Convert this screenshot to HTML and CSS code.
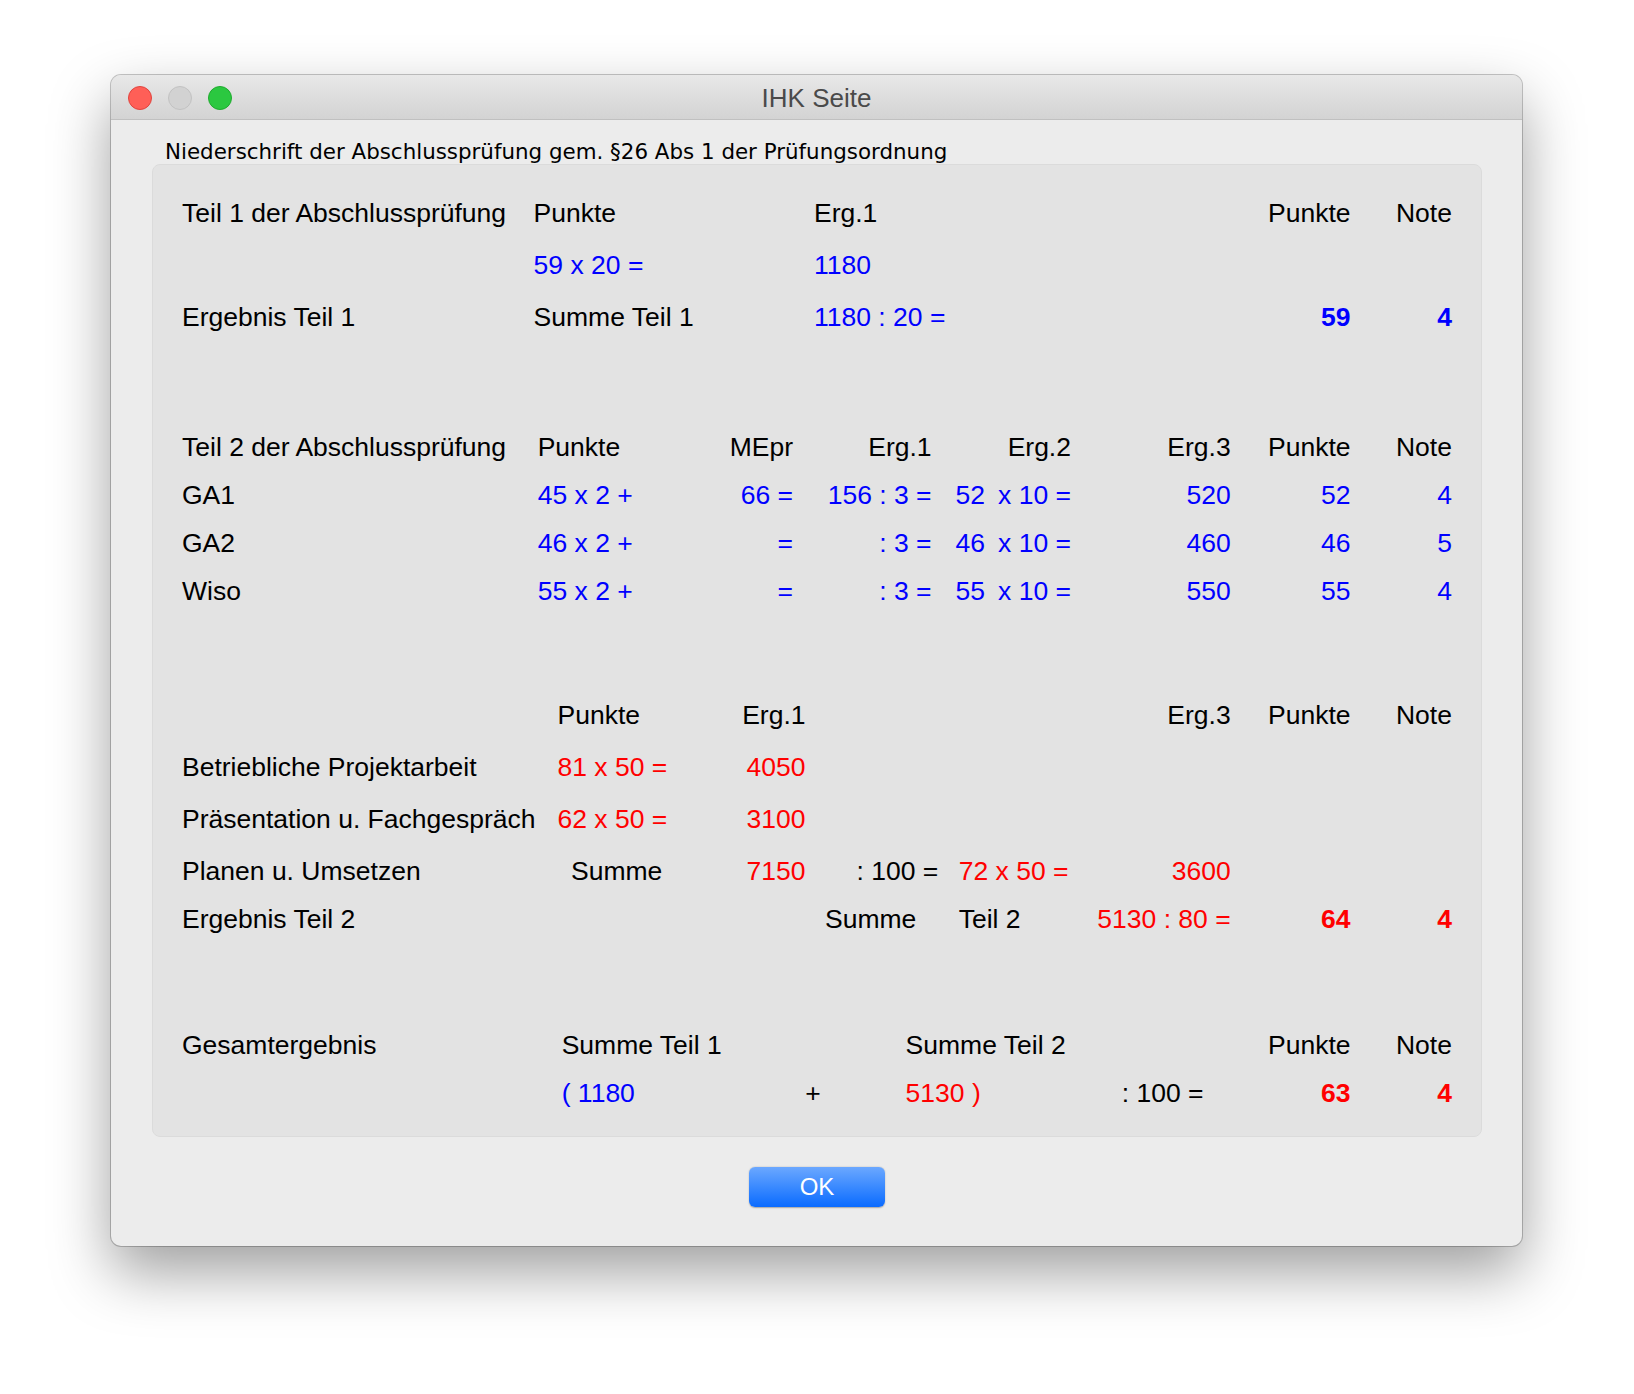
FILE: index.html
```html
<!DOCTYPE html>
<html lang="de">
<head>
<meta charset="utf-8">
<title>IHK Seite</title>
<link rel="stylesheet" href="styles.css">
</head>
<body>
<div class="window">
  <div class="titlebar">
    <div class="lights">
      <span class="light red"></span>
      <span class="light gray"></span>
      <span class="light green"></span>
    </div>
    <div class="title">IHK Seite</div>
    <div></div>
  </div>
  <div class="content">
    <div class="caption">Niederschrift der Abschlussprüfung gem. §26 Abs 1 der Prüfungsordnung</div>
    <div class="box">
      <section class="sec s1">
        <div class="row">
          <span class="k1">Teil 1 der Abschlussprüfung</span>
          <span class="k2">Punkte</span>
          <span class="k3">Erg.1</span>
          <span class="k4 r">Punkte</span>
          <span class="k5 r">Note</span>
        </div>
        <div class="row">
          <span class="k2 bl">59 x 20 =</span>
          <span class="k3 bl">1180</span>
        </div>
        <div class="row">
          <span class="k1">Ergebnis Teil 1</span>
          <span class="k2">Summe Teil 1</span>
          <span class="k3 bl">1180 : 20 =</span>
          <span class="k4 r bl bold">59</span>
          <span class="k5 r bl bold">4</span>
        </div>
      </section>

      <section class="sec s2">
        <div class="row">
          <span class="k1">Teil 2 der Abschlussprüfung</span>
          <span class="k2">Punkte</span>
          <span class="k3 r">MEpr</span>
          <span class="k4 r">Erg.1</span>
          <span class="k6 r">Erg.2</span>
          <span class="k7 r">Erg.3</span>
          <span class="k8 r">Punkte</span>
          <span class="k9 r">Note</span>
        </div>
        <div class="row">
          <span class="k1">GA1</span>
          <span class="k2 bl">45 x 2 +</span>
          <span class="k3 r bl">66 =</span>
          <span class="k4 r bl">156 : 3 =</span>
          <span class="k6 split bl"><span>52</span><span>x 10 =</span></span>
          <span class="k7 r bl">520</span>
          <span class="k8 r bl">52</span>
          <span class="k9 r bl">4</span>
        </div>
        <div class="row">
          <span class="k1">GA2</span>
          <span class="k2 bl">46 x 2 +</span>
          <span class="k3 r bl">=</span>
          <span class="k4 r bl">: 3 =</span>
          <span class="k6 split bl"><span>46</span><span>x 10 =</span></span>
          <span class="k7 r bl">460</span>
          <span class="k8 r bl">46</span>
          <span class="k9 r bl">5</span>
        </div>
        <div class="row">
          <span class="k1">Wiso</span>
          <span class="k2 bl">55 x 2 +</span>
          <span class="k3 r bl">=</span>
          <span class="k4 r bl">: 3 =</span>
          <span class="k6 split bl"><span>55</span><span>x 10 =</span></span>
          <span class="k7 r bl">550</span>
          <span class="k8 r bl">55</span>
          <span class="k9 r bl">4</span>
        </div>
      </section>

      <section class="sec s3">
        <div class="row">
          <span class="k2">Punkte</span>
          <span class="k3 r">Erg.1</span>
          <span class="k6 r">Erg.3</span>
          <span class="k7 r">Punkte</span>
          <span class="k8 r">Note</span>
        </div>
        <div class="row">
          <span class="k1">Betriebliche Projektarbeit</span>
          <span class="k2 rd">81 x 50 =</span>
          <span class="k3 r rd">4050</span>
        </div>
        <div class="row">
          <span class="k1">Präsentation u. Fachgespräch</span>
          <span class="k2 rd">62 x 50 =</span>
          <span class="k3 r rd">3100</span>
        </div>
        <div class="row">
          <span class="k1">Planen u. Umsetzen</span>
          <span class="k2 ind-summe">Summe</span>
          <span class="k3 r rd">7150</span>
          <span class="k4 ind-div">: 100 =</span>
          <span class="k5 rd">72 x 50 =</span>
          <span class="k6 r rd">3600</span>
        </div>
        <div class="row last">
          <span class="k1">Ergebnis Teil 2</span>
          <span class="k4 ind-summe2">Summe</span>
          <span class="k5">Teil 2</span>
          <span class="k6 r rd">5130 : 80 =</span>
          <span class="k7 r rd bold">64</span>
          <span class="k8 r rd bold">4</span>
        </div>
      </section>

      <section class="sec s4">
        <div class="row">
          <span class="k1">Gesamtergebnis</span>
          <span class="k2">Summe Teil 1</span>
          <span class="k5">Summe Teil 2</span>
          <span class="k7 r">Punkte</span>
          <span class="k8 r">Note</span>
        </div>
        <div class="row">
          <span class="k2 bl">( 1180</span>
          <span class="k3 c">+</span>
          <span class="k5 rd">5130 )</span>
          <span class="k6 r">: 100 =</span>
          <span class="k7 r rd bold">63</span>
          <span class="k8 r rd bold">4</span>
        </div>
      </section>
    </div>
    <div class="actions">
      <button class="ok" type="button">OK</button>
    </div>
  </div>
</div>
</body>
</html>
```

FILE: styles.css
```css
html, body {
  margin: 0;
  padding: 0;
  background: #ffffff;
}

html {
  min-height: 100%;
}

body {
  font-family: "Liberation Sans", Arial, Helvetica, sans-serif;
  color: #000;
  padding: 75px 0 0 111px;
  min-height: 100vh;
  box-sizing: border-box;
}

.window {
  width: 1411px;
  height: 1171px;
  background: #ececec;
  border-radius: 10px;
  overflow: hidden;
  box-shadow: 0 26px 60px rgba(0, 0, 0, 0.38), 0 0 0 1px rgba(0, 0, 0, 0.22);
  display: flex;
  flex-direction: column;
}

.titlebar {
  height: 44px;
  border-bottom: 1px solid #c0c0c0;
  background: linear-gradient(#e8e8e8, #d3d3d3);
  display: grid;
  grid-template-columns: 1fr auto 1fr;
  align-items: center;
  flex: none;
}

.lights {
  display: flex;
  gap: 16px;
  padding-left: 17px;
  margin-top: 2px;
}

.light {
  width: 24px;
  height: 24px;
  border-radius: 50%;
  box-sizing: border-box;
  display: block;
}

.light.red {
  background: #ff5f57;
  border: 1px solid #e0443e;
}

.light.gray {
  background: #d2d2d2;
  border: 1px solid #c2c2c2;
}

.light.green {
  background: #2bc840;
  border: 1px solid #1fab2e;
}

.title {
  font-size: 26px;
  color: #4a4a4a;
  margin-top: 2px;
}

.content {
  padding: 20px 40px 0 41px;
}

.caption {
  font-family: "DejaVu Sans", Verdana, sans-serif;
  font-size: 21.4px;
  line-height: 23px;
  padding-left: 13px;
  white-space: nowrap;
}

.box {
  margin-top: 1px;
  background: #e3e3e3;
  border: 1px solid #dbdbdb;
  border-radius: 8px;
  padding: 22.6px 29px 18px 29px;
}

.sec .row {
  display: grid;
  align-items: center;
  font-size: 26.5px;
  white-space: nowrap;
}

.s1 .row {
  grid-template-columns: 351.6px 280.4px 436.6px 100px 101.4px;
  height: 52px;
}

.s2 {
  margin-top: 80.4px;
}

.s2 .row {
  grid-template-columns: 355.7px 164.3px 91px 138.6px 24px 115.4px 159.7px 119.9px 101.4px;
  height: 48px;
}

.s3 {
  margin-top: 74px;
}

.s3 .row {
  grid-template-columns: 375.5px 148px 100px 153.2px 112.3px 159.7px 119.9px 101.4px;
  height: 52px;
}

.s3 .row.last {
  height: 44px;
}

.s4 {
  margin-top: 80px;
}

.s4 .row {
  grid-template-columns: 379.7px 201.3px 100px 42.6px 176.4px 121.6px 147px 101.4px;
  height: 48px;
}

.k1 { grid-column: 1; }
.k2 { grid-column: 2; }
.k3 { grid-column: 3; }
.k4 { grid-column: 4; }
.k5 { grid-column: 5; }
.k6 { grid-column: 6; }
.k7 { grid-column: 7; }
.k8 { grid-column: 8; }
.k9 { grid-column: 9; }

.r { justify-self: end; }
.c { justify-self: center; }

.split {
  display: flex;
  justify-content: space-between;
}

.ind-summe { padding-left: 13.5px; }
.ind-div { padding-left: 51px; }
.ind-summe2 { padding-left: 19.5px; }

.bl { color: #0000ff; }
.rd { color: #ff0000; }
.bold { font-weight: bold; }

.actions {
  display: flex;
  justify-content: center;
  margin-top: 30px;
}

.ok {
  width: 136px;
  height: 40px;
  border: none;
  border-radius: 6px;
  background: linear-gradient(#6ba8ff, #0a6bff);
  color: #ffffff;
  font-family: "Liberation Sans", Arial, sans-serif;
  font-size: 24px;
  padding: 0;
  box-shadow: 0 0.5px 1.5px rgba(0, 0, 0, 0.3);
}
```
